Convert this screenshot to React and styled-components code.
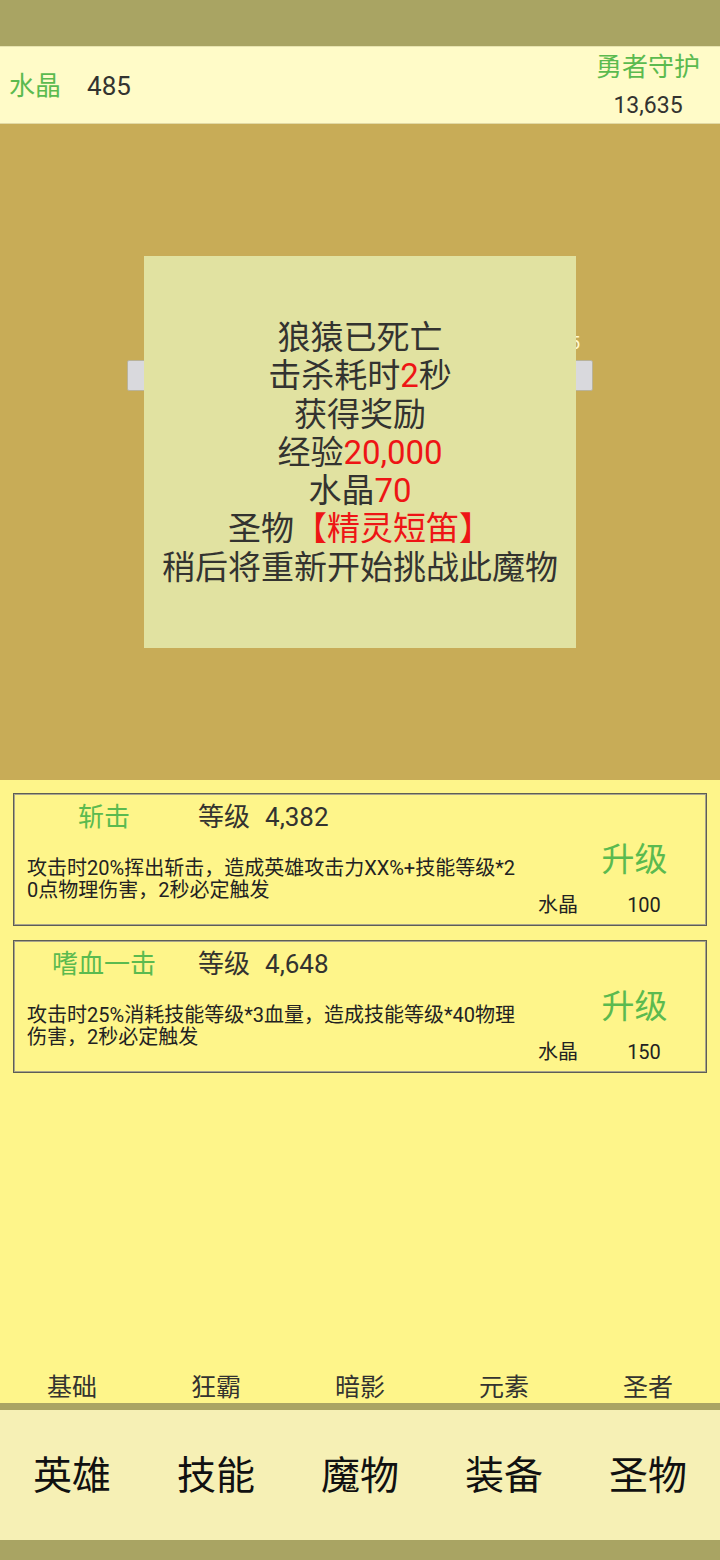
import React from "react";
import styled, { createGlobalStyle } from "styled-components";

const Global = createGlobalStyle`
  html, body { margin: 0; padding: 0; }
  body { font-family: Roboto, "Noto Sans CJK SC", sans-serif; }
  * { box-sizing: border-box; }
`;

const FONT = `Roboto, "Noto Sans CJK SC", sans-serif`;
const GREEN = "#5bba4f";
const INK = "#333330";
const RED = "#ee1515";

const Page = styled.div`
  width: 720px;
  height: 1560px;
  display: flex;
  flex-direction: column;
  font-family: ${FONT};
  overflow: hidden;
`;

const StatusStrip = styled.div`
  height: ${(p) => p.$h}px;
  flex: none;
  background: #a9a463;
`;

const Header = styled.div`
  height: 78px;
  flex: none;
  background: #fffbc8;
  border-top: 1px solid #e8e4b0;
  border-bottom: 1px solid #e2d9a4;
  display: flex;
  align-items: center;
  justify-content: space-between;
  padding: 0 20px 0 9px;
`;

const Resource = styled.div`
  display: flex;
  align-items: center;
  gap: 26px;
  margin-top: 2px;
`;

const GreenLabel = styled.span`
  color: ${GREEN};
  font-size: ${(p) => p.$size || 26}px;
  line-height: 1;
`;

const Value = styled.span`
  color: ${INK};
  font-size: ${(p) => p.$size || 26}px;
  line-height: 1;
`;

const Guard = styled.div`
  display: flex;
  flex-direction: column;
  align-items: center;
  gap: 14px;
  margin-top: 1px;
`;

const Battle = styled.div`
  position: relative;
  height: 656px;
  flex: none;
  background: #c8ac57;
  padding: 208px 127px 0;
`;

const HpLabel = styled.div`
  height: 22px;
  padding-right: 13px;
  text-align: right;
  color: #fff8d0;
  font-size: 18px;
  line-height: 22px;
`;

const HpBar = styled.div`
  margin-top: 6px;
  height: 31px;
  background: #d9d9dd;
  border: 1px solid #b9b39a;
  border-radius: 2px;
`;

const Dialog = styled.div`
  position: absolute;
  top: 132px;
  left: 144px;
  width: 432px;
  height: 392px;
  background: #e1e2a1;
  display: flex;
  flex-direction: column;
  align-items: center;
  justify-content: center;
  padding-top: 2px;
`;

const DialogLine = styled.div`
  font-size: 33px;
  line-height: 38.3px;
  color: ${INK};
  white-space: nowrap;
`;

const Red = styled.span`
  color: ${RED};
`;

const SkillPanel = styled.div`
  flex: 1;
  background: #fef58a;
  display: flex;
  flex-direction: column;
  padding: 13px 13px 0;
`;

const CardList = styled.div`
  display: flex;
  flex-direction: column;
  gap: 14px;
`;

const Card = styled.div`
  height: 133px;
  border: 1px solid #5e5e54;
  box-shadow: inset 0 0 0 1px #a8a48c;
  display: grid;
  grid-template-columns: 1fr 171px;
  padding: 1px;
`;

const CardMain = styled.div`
  display: flex;
  flex-direction: column;
`;

const TitleRow = styled.div`
  height: 44px;
  display: flex;
  align-items: center;
`;

const SkillName = styled.div`
  width: 178px;
  text-align: center;
  color: ${GREEN};
  font-size: 26px;
  line-height: 1;
`;

const LevelLabel = styled.span`
  margin-left: 5px;
  color: ${INK};
  font-size: 26px;
  line-height: 1;
`;

const LevelValue = styled.span`
  margin-left: 15px;
  color: ${INK};
  font-size: 26px;
  line-height: 1;
`;

const Desc = styled.div`
  margin-top: 18px;
  padding-left: 12px;
  width: 508px;
  color: #222;
  font-size: 20px;
  line-height: 22px;
  word-break: break-all;
`;

const CardSide = styled.div`
  display: flex;
  flex-direction: column;
`;

const Upgrade = styled.div`
  margin-top: 45px;
  padding-left: 30px;
  text-align: center;
  color: ${GREEN};
  font-size: 33px;
  line-height: 40px;
`;

const Cost = styled.div`
  margin-top: 14px;
  padding-left: 4px;
  display: grid;
  grid-template-columns: 76px 60px;
  align-items: center;
  font-size: 20px;
  line-height: 22px;
  color: #222;
`;

const CostValue = styled.span`
  text-align: center;
`;

const SubTabs = styled.div`
  margin-top: auto;
  margin-left: -13px;
  margin-right: -13px;
  height: 38px;
  display: grid;
  grid-template-columns: repeat(5, 1fr);
  align-items: center;
  padding-top: 6px;
`;

const SubTab = styled.div`
  text-align: center;
  color: ${INK};
  font-size: 25px;
  line-height: 1;
`;

const Divider = styled.div`
  height: 7px;
  flex: none;
  background: #aaa463;
`;

const MainTabs = styled.div`
  height: 130px;
  flex: none;
  background: #f6f0b5;
  display: grid;
  grid-template-columns: repeat(5, 1fr);
  align-items: center;
`;

const MainTab = styled.div`
  text-align: center;
  color: #111;
  font-size: 39px;
  line-height: 1;
  margin-top: 2px;
`;

const skills = [
  {
    name: "斩击",
    level: "4,382",
    desc: "攻击时20%挥出斩击，造成英雄攻击力XX%+技能等级*20点物理伤害，2秒必定触发",
    cost: "100",
  },
  {
    name: "嗜血一击",
    level: "4,648",
    desc: "攻击时25%消耗技能等级*3血量，造成技能等级*40物理伤害，2秒必定触发",
    cost: "150",
  },
];

export default function App() {
  return (
    <Page>
      <Global />
      <StatusStrip $h={46} />
      <Header>
        <Resource>
          <GreenLabel>水晶</GreenLabel>
          <Value>485</Value>
        </Resource>
        <Guard>
          <GreenLabel>勇者守护</GreenLabel>
          <Value $size={23}>13,635</Value>
        </Guard>
      </Header>
      <Battle>
        <HpLabel>13,635</HpLabel>
        <HpBar />
        <Dialog>
          <DialogLine>狼猿已死亡</DialogLine>
          <DialogLine>
            击杀耗时<Red>2</Red>秒
          </DialogLine>
          <DialogLine>获得奖励</DialogLine>
          <DialogLine>
            经验<Red>20,000</Red>
          </DialogLine>
          <DialogLine>
            水晶<Red>70</Red>
          </DialogLine>
          <DialogLine>
            圣物<Red>【精灵短笛】</Red>
          </DialogLine>
          <DialogLine>稍后将重新开始挑战此魔物</DialogLine>
        </Dialog>
      </Battle>
      <SkillPanel>
        <CardList>
          {skills.map((s) => (
            <Card key={s.name}>
              <CardMain>
                <TitleRow>
                  <SkillName>{s.name}</SkillName>
                  <LevelLabel>等级</LevelLabel>
                  <LevelValue>{s.level}</LevelValue>
                </TitleRow>
                <Desc>{s.desc}</Desc>
              </CardMain>
              <CardSide>
                <Upgrade>升级</Upgrade>
                <Cost>
                  <span>水晶</span>
                  <CostValue>{s.cost}</CostValue>
                </Cost>
              </CardSide>
            </Card>
          ))}
        </CardList>
        <SubTabs>
          {["基础", "狂霸", "暗影", "元素", "圣者"].map((t) => (
            <SubTab key={t}>{t}</SubTab>
          ))}
        </SubTabs>
      </SkillPanel>
      <Divider />
      <MainTabs>
        {["英雄", "技能", "魔物", "装备", "圣物"].map((t) => (
          <MainTab key={t}>{t}</MainTab>
        ))}
      </MainTabs>
      <StatusStrip $h={20} />
    </Page>
  );
}
